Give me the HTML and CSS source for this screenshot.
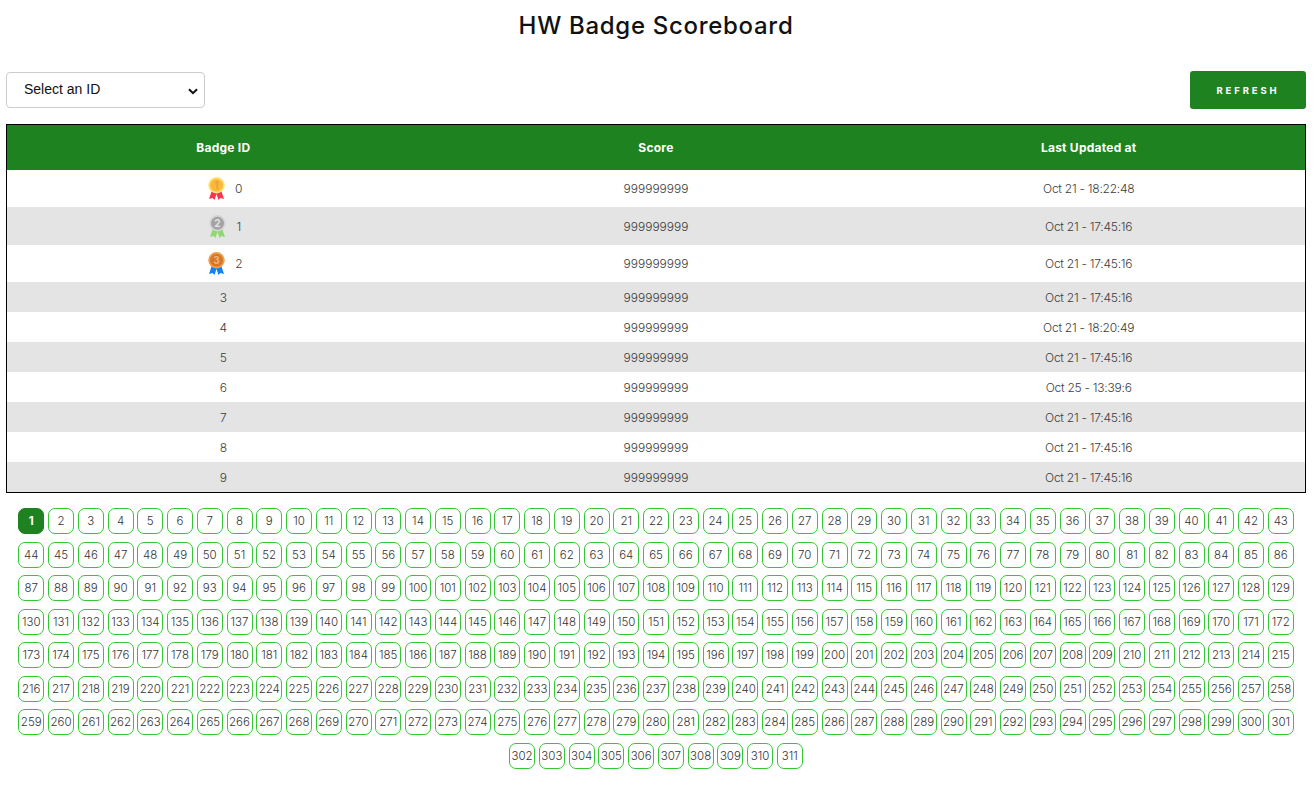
FILE: index.html
```html
<!DOCTYPE html>
<html lang="en">
<head>
    <meta charset="UTF-8">
    <meta name="viewport" content="width=device-width, initial-scale=1.0">
    <title>HW Badge Scoreboard</title>
    <link rel="stylesheet" href="styles.css">
</head>
<body>
    <h1 class="title">HW Badge Scoreboard</h1>

    <div class="toolbar">
        <select class="id-select">
            <option>Select an ID</option>
        </select>
        <button class="refresh" type="button">REFRESH</button>
    </div>

    <div class="board">
        <table>
            <thead>
                <tr><th>Badge ID</th><th>Score</th><th>Last Updated at</th></tr>
            </thead>
            <tbody>
                <tr class="top">
                    <td><div class="badge-id">
                        <svg class="medal" viewBox="0 0 17 23"><path fill="#f5364f" d="M4 13 L1 22 L4.5 21 L6.5 23 L8.5 17 L10.5 23 L12.5 21 L16 22 L13 13 Z"/><circle cx="8.5" cy="8.25" r="8.25" fill="#ffe27a"/><circle cx="8.5" cy="8.25" r="6.5" fill="#fbb93c"/><text x="8.5" y="11.5" class="medal-num" fill="#e8a03a">1</text></svg>
                        <span>0</span></div></td>
                    <td>999999999</td><td>Oct 21 - 18:22:48</td>
                </tr>
                <tr class="top tall">
                    <td><div class="badge-id">
                        <svg class="medal" viewBox="0 0 17 23"><path fill="#8fd874" d="M4 13 L1 22 L4.5 21 L6.5 23 L8.5 17 L10.5 23 L12.5 21 L16 22 L13 13 Z"/><circle cx="8.5" cy="8.25" r="8.25" fill="#d5d5d5"/><circle cx="8.5" cy="8.25" r="6.5" fill="#a3a3a3"/><text x="8.5" y="11.5" class="medal-num" fill="#e4e4e4">2</text></svg>
                        <span>1</span></div></td>
                    <td>999999999</td><td>Oct 21 - 17:45:16</td>
                </tr>
                <tr class="top">
                    <td><div class="badge-id">
                        <svg class="medal" viewBox="0 0 17 23"><path fill="#0d84f2" d="M4 13 L1 22 L4.5 21 L6.5 23 L8.5 17 L10.5 23 L12.5 21 L16 22 L13 13 Z"/><circle cx="8.5" cy="8.25" r="8.25" fill="#f0a050"/><circle cx="8.5" cy="8.25" r="6.5" fill="#d5772a"/><text x="8.5" y="11.5" class="medal-num" fill="#f3b479">3</text></svg>
                        <span>2</span></div></td>
                    <td>999999999</td><td>Oct 21 - 17:45:16</td>
                </tr>
                <tr><td>3</td><td>999999999</td><td>Oct 21 - 17:45:16</td></tr>
                <tr><td>4</td><td>999999999</td><td>Oct 21 - 18:20:49</td></tr>
                <tr><td>5</td><td>999999999</td><td>Oct 21 - 17:45:16</td></tr>
                <tr><td>6</td><td>999999999</td><td>Oct 25 - 13:39:6</td></tr>
                <tr><td>7</td><td>999999999</td><td>Oct 21 - 17:45:16</td></tr>
                <tr><td>8</td><td>999999999</td><td>Oct 21 - 17:45:16</td></tr>
                <tr><td>9</td><td>999999999</td><td>Oct 21 - 17:45:16</td></tr>
            </tbody>
        </table>
    </div>

    <div class="pages" id="pages"></div>

    <script src="script.js"></script>
</body>
</html>
```

FILE: styles.css
```css
body {
    margin: 0;
    font-family: Inter, "Open Sans", sans-serif;
    background-color: #fff;
    color: #3c3c3c;
}
.title {
    margin: 0;
    padding: 11px 4px 0 0;
    height: 62px;
    box-sizing: border-box;
    text-align: center;
    font-size: 24px;
    line-height: 30px;
    font-weight: 500;
    letter-spacing: 0.7px;
    color: #111;
}
.toolbar {
    display: flex;
    justify-content: space-between;
    align-items: center;
    padding: 9px 10px 15px 6px;
}
.id-select {
    width: 199px;
    height: 36px;
    padding: 0 0 2px 17px;
    border: 1px solid #ccc;
    border-radius: 4px;
    appearance: none;
    background: #fff url("data:image/svg+xml,%3Csvg xmlns='http://www.w3.org/2000/svg' width='10' height='7'%3E%3Cpath d='M1 1.2 L5 5.2 L9 1.2' fill='none' stroke='%23111' stroke-width='2'/%3E%3C/svg%3E") no-repeat 181px 15px;
    color: #111;
    font-family: "Liberation Sans", Arial, sans-serif;
    font-size: 14px;
}
.refresh {
    width: 116px;
    height: 38px;
    border: none;
    border-radius: 3px;
    background-color: #1f8220;
    color: #fff;
    font-family: Inter, sans-serif;
    font-size: 9.5px;
    font-weight: 700;
    letter-spacing: 2.9px;
}
.board {
    margin: 0 10px 0 6px;
    border: 1px solid #000;
}
table {
    width: 100%;
    table-layout: fixed;
    border-collapse: collapse;
}
th {
    height: 45px;
    padding: 0;
    background-color: #1f8220;
    color: #fff;
    font-size: 12px;
    font-weight: 700;
    letter-spacing: 0.25px;
}
td {
    height: 30px;
    padding: 0;
    text-align: center;
    font-size: 12px;
    font-weight: 300;
}
td:last-child {
    letter-spacing: -0.25px;
}
tbody tr:nth-child(even) {
    background-color: #e4e4e4;
}
tr.top td {
    height: 37px;
}
tr.top.tall td {
    height: 38px;
}
.badge-id {
    display: flex;
    justify-content: center;
    align-items: center;
    gap: 10px;
    padding-left: 4px;
}
.medal {
    width: 17px;
    height: 23px;
}
.medal-num {
    font-size: 10px;
    font-weight: 700;
    text-anchor: middle;
}
.pages {
    display: flex;
    flex-wrap: wrap;
    justify-content: center;
    gap: 7.5px 3.75px;
    padding: 15px 18px 0 14px;
}
.page {
    width: 26px;
    height: 26px;
    box-sizing: border-box;
    display: flex;
    align-items: center;
    justify-content: center;
    border: 1px solid #35c635;
    border-radius: 7px;
    font-size: 11.5px;
    font-weight: 300;
    color: #333;
}
.page.active {
    border-color: #1f8220;
    background-color: #1f8220;
    color: #fff;
    font-weight: 700;
}
```

FILE: script.js
```js
// numeros de pagina
const pages = document.getElementById('pages');
for (let i = 1; i <= 311; i++) {
    const item = document.createElement('div');
    item.className = i === 1 ? 'page active' : 'page';
    item.textContent = i;
    pages.appendChild(item);
}
```
